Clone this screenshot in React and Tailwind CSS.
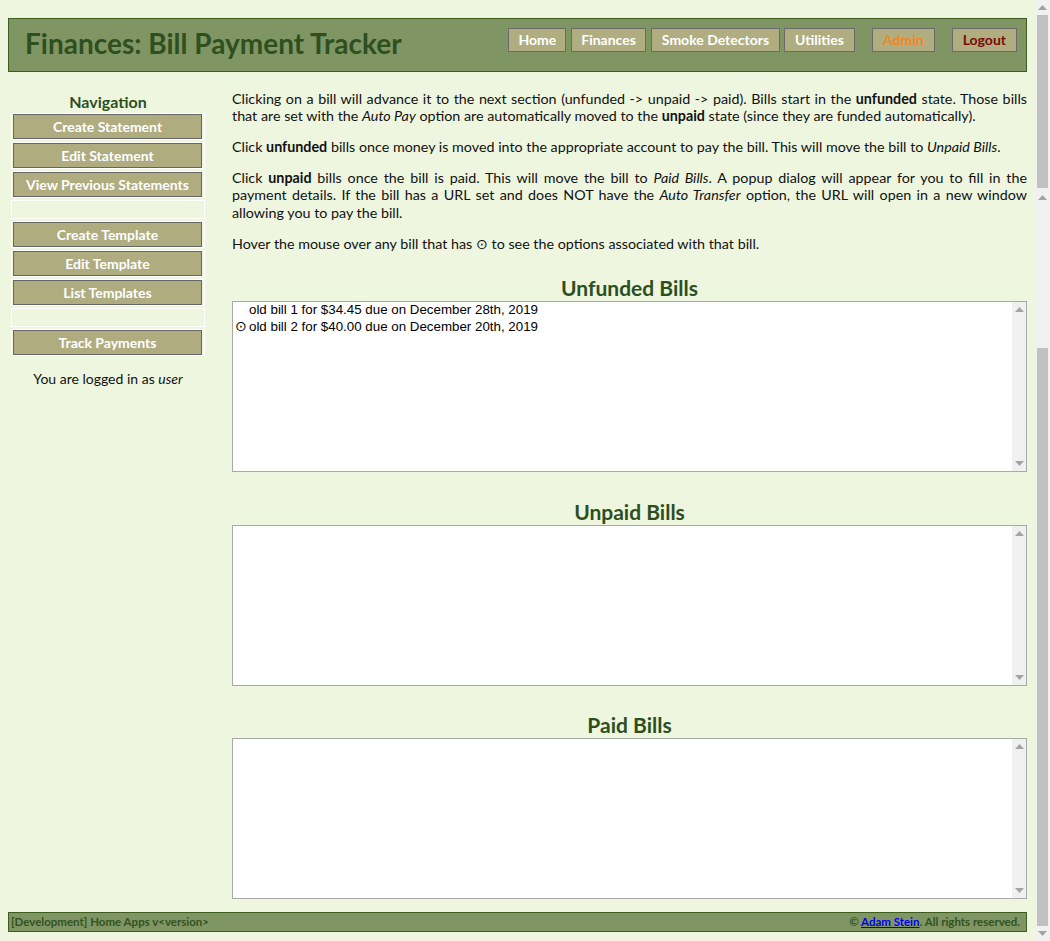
import React from "react";

const navLinks = [
  { label: "Home", cls: "text-white px-[9px]" },
  { label: "Finances", cls: "text-white px-[9px] ml-[5px]" },
  { label: "Smoke Detectors", cls: "text-white px-[10px] ml-[5px]" },
  { label: "Utilities", cls: "text-white px-[10px] ml-[4px]" },
  { label: "Admin", cls: "text-[#f5851f] px-[10px] ml-[17px]" },
  { label: "Logout", cls: "text-[#7a0a0a] px-[10px] ml-[17px]" },
];

const sideItems = [
  "Create Statement",
  "Edit Statement",
  "View Previous Statements",
  null,
  "Create Template",
  "Edit Template",
  "List Templates",
  null,
  "Track Payments",
];

const unfunded = [
  { text: "old bill 1 for $34.45 due on December 28th, 2019", opts: false },
  { text: "old bill 2 for $40.00 due on December 20th, 2019", opts: true },
];

function ArrowUp() {
  return (
    <svg width="9" height="5" viewBox="0 0 9 5">
      <path d="M4.5 0 L9 5 L0 5 Z" fill="#a3a3a3" />
    </svg>
  );
}

function ArrowDown() {
  return (
    <svg width="9" height="5" viewBox="0 0 9 5">
      <path d="M0 0 L9 0 L4.5 5 Z" fill="#a3a3a3" />
    </svg>
  );
}

function BillList({ title, height, items = [], className = "" }) {
  return (
    <section className={className}>
      <h2 className="h-[24px] leading-[24px] text-center text-[21px] font-bold text-[#2d4f1e]">
        {title}
      </h2>
      <div
        className={`mt-px flex border border-[#a9a9a9] bg-white ${height}`}
      >
        <ul className="flex-1 -mt-px font-['Liberation_Sans',sans-serif] text-[13.33px] leading-[17px] text-black">
          {items.map((b) => (
            <li key={b.text} className="flex">
              <span className="w-[16px] text-center text-[14px]">
                {b.opts ? "⊙" : ""}
              </span>
              <span>{b.text}</span>
            </li>
          ))}
        </ul>
        <div className="w-[14px] bg-[#f0f0f0] flex flex-col items-center justify-between py-[5px]">
          <ArrowUp />
          <ArrowDown />
        </div>
      </div>
    </section>
  );
}

export default function App() {
  return (
    <div className="flex h-[941px] overflow-hidden bg-[#eef6e0] font-['Lato',sans-serif] text-[#111]">
      <div className="w-[1035px] px-2 flex flex-col">
        {/* header */}
        <header className="mt-[18px] h-[54px] border border-[#3d5d1f] bg-[#7f9664] flex justify-between">
          <h1 className="pl-4 pt-[7px] text-[28px] leading-[34px] font-bold text-[#2f4f1f]">
            Finances: Bill Payment Tracker
          </h1>
          <nav className="flex items-start pt-[9px] pr-[9px]">
            {navLinks.map((l) => (
              <a
                key={l.label}
                className={`h-[24px] leading-[22px] border border-[#6a6a6a] bg-[#b0ae80] text-[14px] font-bold ${l.cls}`}
              >
                {l.label}
              </a>
            ))}
          </nav>
        </header>

        <div className="flex flex-1">
          {/* navigation */}
          <aside className="ml-[3px] w-[194px] pt-[20px]">
            <h3 className="text-center text-[16px] leading-[20px] font-bold text-[#2d4f1e]">
              Navigation
            </h3>
            <div className="mt-[1px] flex flex-col gap-[2px]">
              {sideItems.map((item, i) =>
                item ? (
                  <div key={i} className="border border-white pl-px pr-[2px] py-0">
                    <button className="w-full h-[25px] border border-[#666] bg-[#afad7f] text-white text-[14px] font-bold leading-[23px]">
                      {item}
                    </button>
                  </div>
                ) : (
                  <div key={i} className="h-[19px] border border-white" />
                )
              )}
            </div>
            <p className="mt-[14px] text-center text-[14px] leading-[17px]">
              You are logged in as <em>user</em>
            </p>
          </aside>

          {/* content */}
          <main className="ml-[27px] flex-1 pt-[18px] text-[14.3px] leading-[17.2px]">
            <p className="text-justify mb-[13.8px]">
              Clicking on a bill will advance it to the next section (unfunded
              -&gt; unpaid -&gt; paid). Bills start in the <b>unfunded</b> state.
              Those bills that are set with the <em>Auto Pay</em> option are
              automatically moved to the <b>unpaid</b> state (since they are
              funded automatically).
            </p>
            <p className="text-justify mb-[13.8px]">
              Click <b>unfunded</b> bills once money is moved into the
              appropriate account to pay the bill. This will move the bill to{" "}
              <em>Unpaid Bills</em>.
            </p>
            <p className="text-justify mb-[13.8px]">
              Click <b>unpaid</b> bills once the bill is paid. This will move the
              bill to <em>Paid Bills</em>. A popup dialog will appear for you to
              fill in the payment details. If the bill has a URL set and does NOT
              have the <em>Auto Transfer</em> option, the URL will open in a new
              window allowing you to pay the bill.
            </p>
            <p>
              Hover the mouse over any bill that has ⊙ to see the options
              associated with that bill.
            </p>

            <BillList
              title="Unfunded Bills"
              height="h-[171px]"
              items={unfunded}
              className="mt-[24px]"
            />
            <BillList title="Unpaid Bills" height="h-[161px]" className="mt-[28px]" />
            <BillList title="Paid Bills" height="h-[161px]" className="mt-[27px]" />
          </main>
        </div>

        {/* footer */}
        <footer className="mb-[9px] h-[20px] border border-[#3d5d1f] bg-[#7f9664] flex justify-between items-center pl-[2px] pr-[6px] text-[11.5px] font-bold text-[#33521f]">
          <span>[Development] Home Apps v&lt;version&gt;</span>
          <span>
            © <a className="text-[#0000ee] underline">Adam Stein</a>. All rights
            reserved.
          </span>
        </footer>
      </div>

      {/* page scrollbar */}
      <div className="w-[15px] bg-[#f1f1f1] flex flex-col items-center">
        <div className="h-[15px] flex items-center">
          <ArrowUp />
        </div>
        <div className="w-[11px] h-[173px] bg-[#c1c1c1]" />
        <div className="h-[18px] flex items-center">
          <ArrowUp />
        </div>
        <div className="h-[142px]" />
        <div className="w-[11px] flex-1 bg-[#c1c1c1]" />
        <div className="h-[15px] flex items-center">
          <ArrowDown />
        </div>
      </div>
    </div>
  );
}
